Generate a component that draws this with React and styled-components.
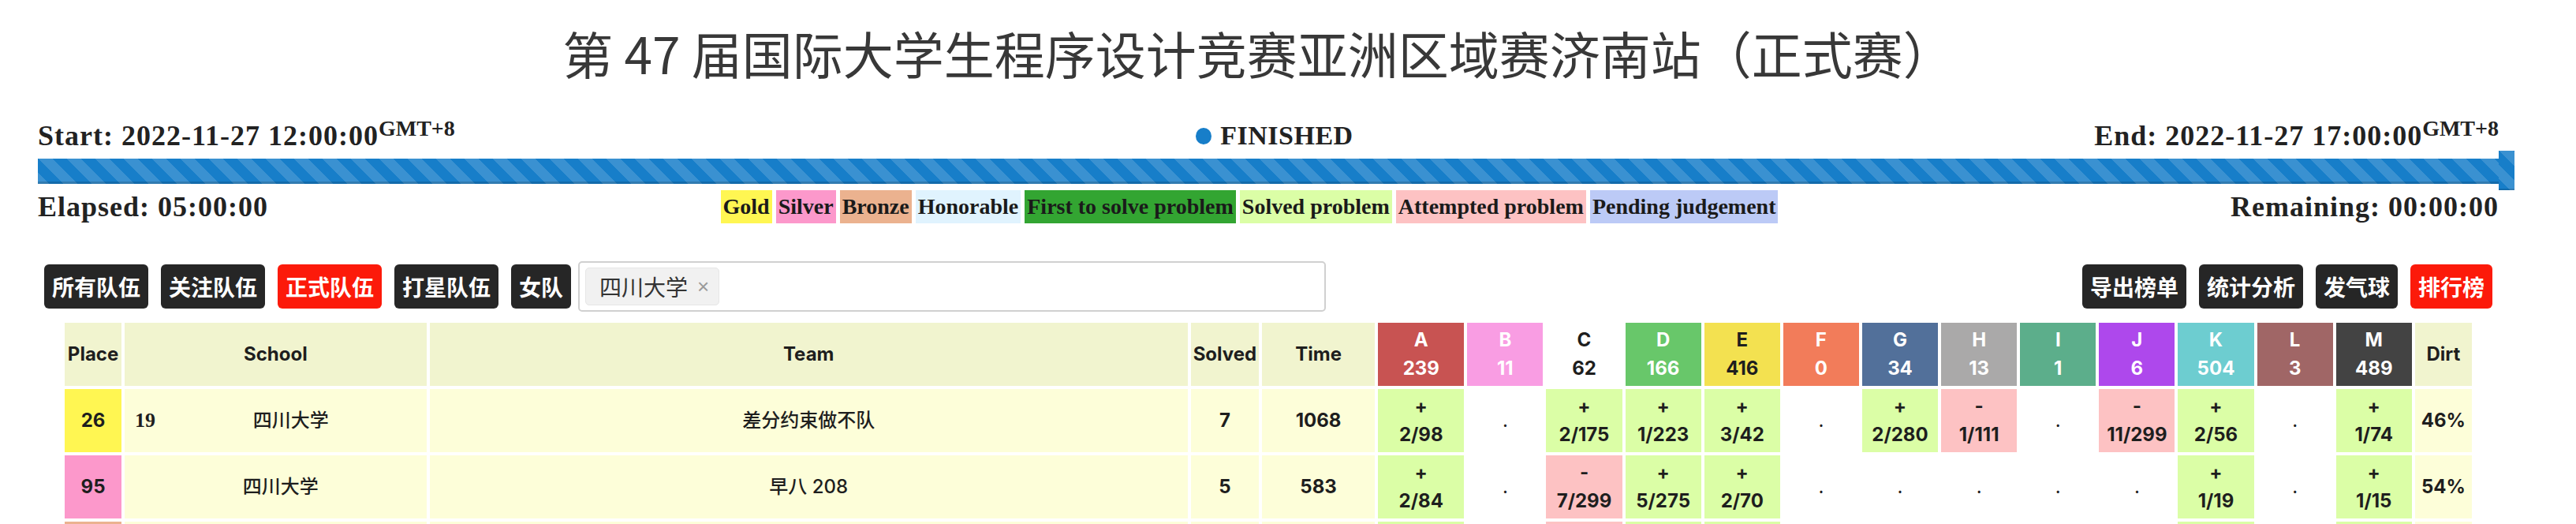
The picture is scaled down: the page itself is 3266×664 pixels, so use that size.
import React from "react"
import styled, { createGlobalStyle } from "styled-components"

const problems = [
  { id: "A", count: 239, bg: "#c85352", fg: "#fff", w: 109 },
  { id: "B", count: 11, bg: "#f99de3", fg: "#fff", w: 96 },
  { id: "C", count: 62, bg: "#fff", fg: "#1e1e1e", w: 96 },
  { id: "D", count: 166, bg: "#68c76a", fg: "#fff", w: 96 },
  { id: "E", count: 416, bg: "#f3e150", fg: "#1e1e1e", w: 96 },
  { id: "F", count: 0, bg: "#f27c5a", fg: "#fff", w: 96 },
  { id: "G", count: 34, bg: "#52709a", fg: "#fff", w: 96 },
  { id: "H", count: 13, bg: "#aaa9a9", fg: "#fff", w: 96 },
  { id: "I", count: 1, bg: "#5cae8b", fg: "#fff", w: 96 },
  { id: "J", count: 6, bg: "#ae48ec", fg: "#fff", w: 96 },
  { id: "K", count: 504, bg: "#6dcdd0", fg: "#fff", w: 96 },
  { id: "L", count: 3, bg: "#a06666", fg: "#fff", w: 96 },
  { id: "M", count: 489, bg: "#434343", fg: "#fff", w: 96 },
]

// the third row only peeks in at the bottom edge, so it carries colours only
const rows = [
  {
    key: 1, place: 26, medal: "#fff652", rank: 19, school: "四川大学", team: "差分约束做不队",
    solved: 7, time: 1068, dirt: "46%",
    cells: ["+ 2/98", "", "+ 2/175", "+ 1/223", "+ 3/42", "", "+ 2/280", "- 1/111", "", "- 11/299", "+ 2/56", "", "+ 1/74"],
  },
  {
    key: 2, place: 95, medal: "#fc98cb", school: "四川大学", team: "早八 208",
    solved: 5, time: 583, dirt: "54%",
    cells: ["+ 2/84", "", "- 7/299", "+ 5/275", "+ 2/70", "", "", "", "", "", "+ 1/19", "", "+ 1/15"],
  },
  {
    key: 3, medal: "#ebb28f", hidden: true,
    cells: ["+", "", "-", "+", "+", "", "", "", "", "", "+", "", "+"],
  },
]

const legend = [
  ["Gold", "#fff652"],
  ["Silver", "#fc98cb"],
  ["Bronze", "#ebb28f"],
  ["Honorable", "#e0f3fe"],
  ["First to solve problem", "#33a532"],
  ["Solved problem", "#dbfea6"],
  ["Attempted problem", "#fdc2c3"],
  ["Pending judgement", "#bccaf6"],
]

const GlobalStyle = createGlobalStyle`
  html, body {
    margin: 0;
    padding: 0;
    background: #fff;
  }
  body {
    font-family: "Liberation Serif", serif;
    color: #222;
  }
`;

const ProblemCell = ({ value, hidden }) => {
  if (!value) return <Cell $bg="#fff">{!hidden && <Empty>.</Empty>}</Cell>
  const [sign, tries] = value.split(" ")
  const bg = sign === "+" ? "#dbfea6" : "#fdc2c3"
  if (hidden) return <Cell $bg={bg} />
  return <Cell $bg={bg}>{sign}<br />{tries}</Cell>
}

const App = () => {
  return <>
    <GlobalStyle />
    <Page>
      <Title>第 47 届国际大学生程序设计竞赛亚洲区域赛济南站（正式赛）</Title>
      <TimeRow>
        <TimeText>Start: 2022-11-27 12:00:00<Sup>GMT+8</Sup></TimeText>
        <Status><Dot />FINISHED</Status>
        <TimeText>End: 2022-11-27 17:00:00<Sup>GMT+8</Sup></TimeText>
      </TimeRow>
      <Track>
        <Handle />
      </Track>
      <InfoRow>
        <TimeText>Elapsed: 05:00:00</TimeText>
        <Legend>
          {legend.map(([label, bg]) => <LegendItem key={label} $bg={bg}>{label}</LegendItem>)}
        </Legend>
        <TimeText>Remaining: 00:00:00</TimeText>
      </InfoRow>
      <Toolbar>
        <ButtonGroup>
          <Button>所有队伍</Button>
          <Button>关注队伍</Button>
          <Button $active>正式队伍</Button>
          <Button>打星队伍</Button>
          <Button>女队</Button>
          <FilterBox>
            <Tag>四川大学<TagClose>×</TagClose></Tag>
          </FilterBox>
        </ButtonGroup>
        <ButtonGroup>
          <Button>导出榜单</Button>
          <Button>统计分析</Button>
          <Button>发气球</Button>
          <Button $active>排行榜</Button>
        </ButtonGroup>
      </Toolbar>
      <Board>
        <colgroup>
          <Col $w={72} />
          <Col $w={382} />
          <Col $w={960} />
          <Col $w={86} />
          <Col $w={143} />
          {problems.map(p => <Col key={p.id} $w={p.w} />)}
          <Col $w={72} />
        </colgroup>
        <thead>
          <tr>
            <HeadCell>Place</HeadCell>
            <HeadCell>School</HeadCell>
            <HeadCell>Team</HeadCell>
            <HeadCell>Solved</HeadCell>
            <HeadCell>Time</HeadCell>
            {problems.map(p => (
              <HeadCell key={p.id} $bg={p.bg} $fg={p.fg}>{p.id}<br />{p.count}</HeadCell>
            ))}
            <HeadCell>Dirt</HeadCell>
          </tr>
        </thead>
        <tbody>
          {rows.map(r => (
            <tr key={r.key}>
              <Cell $bg={r.medal}>{r.place}</Cell>
              <Cell>
                {r.school && (
                  <SchoolWrap>
                    {r.rank && <Rank>{r.rank}</Rank>}
                    <Name>{r.school}</Name>
                  </SchoolWrap>
                )}
              </Cell>
              <Cell>{r.team && <Name>{r.team}</Name>}</Cell>
              <Cell>{r.solved}</Cell>
              <Cell>{r.time}</Cell>
              {r.cells.map((c, i) => <ProblemCell key={i} value={c} hidden={r.hidden} />)}
              <Cell>{r.dirt}</Cell>
            </tr>
          ))}
        </tbody>
      </Board>
    </Page>
  </>
}

const Page = styled.div`
  margin-left: 48px;
  width: 3120px;
`;

const Title = styled.h1`
  margin: 20px 0 0;
  padding-right: 26px;
  font: 400 64px/93px "Noto Sans CJK SC", sans-serif;
  color: #383838;
  text-align: center;
`;

const TimeRow = styled.div`
  display: flex;
  justify-content: space-between;
  align-items: center;
  margin-top: 39px;
  height: 40px;
`;

const TimeText = styled.div`
  font: 700 36px/40px "Liberation Serif", serif;
  letter-spacing: 1px;
  color: #222;
  white-space: nowrap;
`;

const Sup = styled.sup`
  font-size: 28px;
  line-height: 0;
  letter-spacing: 0;
  vertical-align: 12px;
`;

const Status = styled(TimeText)`
  display: flex;
  align-items: center;
  font-size: 34px;
  letter-spacing: 0.5px;
`;

const Dot = styled.span`
  width: 20px;
  height: 21px;
  border-radius: 50%;
  background: #177ec9;
  margin-right: 11px;
`;

const stripes = `
  background-color: #177ec9;
  background-image: linear-gradient(45deg,
    rgba(255,255,255,.15) 25%, transparent 25%, transparent 50%,
    rgba(255,255,255,.15) 50%, rgba(255,255,255,.15) 75%, transparent 75%, transparent);
  background-size: 36px 36px;
`;

const Track = styled.div`
  position: relative;
  margin-top: 9px;
  height: 32px;
  ${stripes}
  box-shadow: inset 0 -3px 0 rgba(0, 0, 0, 0.15);
`;

const Handle = styled.div`
  position: absolute;
  right: -20px;
  top: -10px;
  width: 20px;
  height: 50px;
  ${stripes}
  box-shadow: inset 0 -2px 0 rgba(0, 0, 0, 0.15);
`;

const InfoRow = styled.div`
  display: flex;
  justify-content: space-between;
  align-items: center;
  margin-top: 8px;
  height: 42px;
`;

const Legend = styled.div`
  display: flex;
  gap: 5px;
`;

const LegendItem = styled.span`
  background: ${p => p.$bg};
  padding: 0 3px;
  font: 700 28px/42px "Liberation Serif", serif;
  color: #1a1a1a;
  white-space: nowrap;
`;

const Toolbar = styled.div`
  display: flex;
  justify-content: space-between;
  align-items: center;
  margin-top: 48px;
  height: 64px;
  padding: 0 8px;
`;

const ButtonGroup = styled.div`
  display: flex;
  align-items: center;
  gap: 16px;
`;

const Button = styled.button`
  height: 56px;
  padding: 0 10px;
  border: none;
  border-radius: 6px;
  background: ${p => (p.$active ? "#fc1a0a" : "#262626")};
  color: #fff;
  font: 700 28px/56px "Noto Sans CJK SC", sans-serif;
  white-space: nowrap;
`;

const FilterBox = styled.div`
  box-sizing: border-box;
  display: flex;
  align-items: center;
  width: 948px;
  height: 64px;
  margin-left: -7px;
  padding: 0 7px;
  border: 2px solid #d0d0d0;
  border-radius: 5px;
`;

const Tag = styled.span`
  box-sizing: border-box;
  display: flex;
  align-items: center;
  gap: 12px;
  height: 48px;
  padding: 0 12px 0 17px;
  background: #f1f1f1;
  border: 1px solid #e6e6e6;
  border-radius: 5px;
  font: 400 28px "Noto Sans CJK SC", sans-serif;
  color: #333;
`;

const TagClose = styled.span`
  font: 400 26px "Liberation Sans", sans-serif;
  color: #9a9a9a;
`;

const Board = styled.table`
  width: 3060px;
  margin: 10px auto 0;
  border-collapse: separate;
  border-spacing: 4px;
  table-layout: fixed;
  font: 700 24px/36px Inter, "Noto Sans CJK SC", sans-serif;
  color: #1e1e1e;

  tr {
    height: 80px;
  }
`;

const Col = styled.col`
  width: ${p => p.$w}px;
`;

const HeadCell = styled.th`
  padding: 0;
  background: ${p => p.$bg || "#f1f4cf"};
  color: ${p => p.$fg || "#1e1e1e"};
  font-weight: 700;
  text-align: center;
  vertical-align: middle;
  white-space: nowrap;
`;

const Cell = styled.td`
  padding: 0;
  background: ${p => p.$bg || "#fdfed9"};
  text-align: center;
  vertical-align: middle;
  white-space: nowrap;
`;

const SchoolWrap = styled.div`
  display: flex;
  align-items: center;
  padding-left: 13px;
`;

const Rank = styled.span`
  font: 700 26px "Liberation Serif", serif;
`;

const Name = styled.span`
  flex: 1;
  font-weight: 500;
  text-align: center;
`;

const Empty = styled.span`
  font-weight: 400;
`;

export default App
